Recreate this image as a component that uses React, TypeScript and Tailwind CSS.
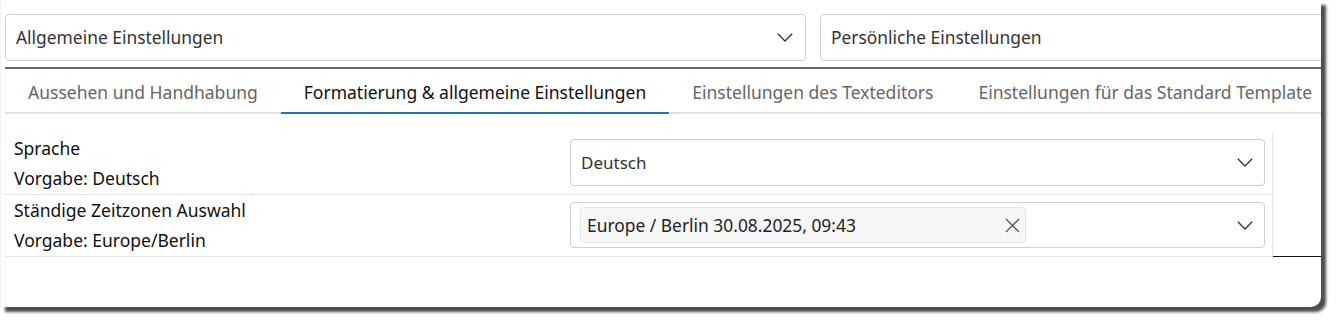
import React from "react";

const Chevron = () => (
  <svg width="16" height="9" viewBox="0 0 16 9" fill="none" className="shrink-0">
    <path d="M0.8 0.8L8 8L15.2 0.8" stroke="#333" strokeWidth="1.3" />
  </svg>
);

const XIcon = () => (
  <svg width="15" height="15" viewBox="0 0 15 15" fill="none" className="shrink-0">
    <path d="M1 1L14 14M14 1L1 14" stroke="#555" strokeWidth="1.3" />
  </svg>
);

const tabs = [
  "Aussehen und Handhabung",
  "Formatierung & allgemeine Einstellungen",
  "Einstellungen des Texteditors",
  "Einstellungen für das Standard Template",
];

export default function App() {
  return (
    <div
      className="w-[1336px] h-[322px] bg-white overflow-hidden"
      style={{ fontFamily: '"Noto Sans", "Open Sans", sans-serif' }}
    >
      <div className="w-[1321px] h-[307px] bg-white rounded-br-[10px] shadow-[5px_5px_3px_rgba(0,0,0,0.7)] border-l border-dotted border-[#e6e6e6]">
        <div className="h-full overflow-hidden pl-[4px]">
          <div className="pt-[14px] flex gap-[14px]">
            <div className="w-[801px] shrink-0 h-[47px] border border-[#cfcfcf] rounded-[4px] flex items-center justify-between pl-[10px] pr-[12px] text-[17.4px] text-[#333]">
              <span>Allgemeine Einstellungen</span>
              <Chevron />
            </div>
            <div className="w-[540px] shrink-0 h-[47px] border border-[#cfcfcf] rounded-[4px] flex items-center pl-[10px] text-[17.4px] text-[#333]">
              <span>Persönliche Einstellungen</span>
            </div>
          </div>
          <div className="mt-[6px] h-[2px] bg-[#666]" />
          <div className="flex h-[45px] border-b-2 border-[#e3e3e3]">
            {tabs.map((t, i) => (
              <div
                key={t}
                className={
                  i === 1
                    ? "px-[23px] pt-[3px] flex items-center text-[17.5px] text-[#111] border-b-2 border-[#1f77b9] -mb-[2px] whitespace-nowrap"
                    : i === 3
                    ? "pl-[22px] pr-[23px] pt-[3px] flex items-center text-[17.5px] text-[#666] whitespace-nowrap"
                    : "px-[23px] pt-[3px] flex items-center text-[17.5px] text-[#666] whitespace-nowrap"
                }
              >
                {t}
              </div>
            ))}
          </div>
          <div className="mt-[19px] flex">
            <div className="w-[1268px] shrink-0 border-r border-[#e3e3e3]">
              <div className="flex h-[62px] border-b border-[#e3e3e3]">
                <div className="w-[565px] shrink-0 pl-[9px] text-[17.5px] leading-[30px] text-[#111]">
                  <div>Sprache</div>
                  <div>Vorgabe: Deutsch</div>
                </div>
                <div className="flex-1 pr-[7px] pt-[6px]">
                  <div className="h-[47px] border border-[#cfcfcf] rounded-[4px] flex items-center justify-between pl-[10px] pr-[11px] text-[17px] text-[#333]">
                    <span>Deutsch</span>
                    <Chevron />
                  </div>
                </div>
              </div>
              <div className="flex h-[62px] border-b border-[#e3e3e3]">
                <div className="w-[565px] shrink-0 pl-[9px] text-[17.5px] leading-[30px] text-[#111]">
                  <div>Ständige Zeitzonen Auswahl</div>
                  <div>Vorgabe: Europe/Berlin</div>
                </div>
                <div className="flex-1 pr-[7px] pt-[7px]">
                  <div className="h-[46px] border border-[#cfcfcf] rounded-[4px] flex items-center justify-between pl-[9px] pr-[11px]">
                    <div className="w-[446px] h-[36px] bg-[#f7f7f7] border border-[#e4e4e4] rounded-[4px] flex items-center justify-between pl-[6px] pr-[5px] text-[17.4px] text-[#222]">
                      <span>Europe / Berlin 30.08.2025, 09:43</span>
                      <XIcon />
                    </div>
                    <Chevron />
                  </div>
                </div>
              </div>
            </div>
            <div className="flex-1 border-b border-[#111]" />
          </div>
        </div>
      </div>
    </div>
  );
}
